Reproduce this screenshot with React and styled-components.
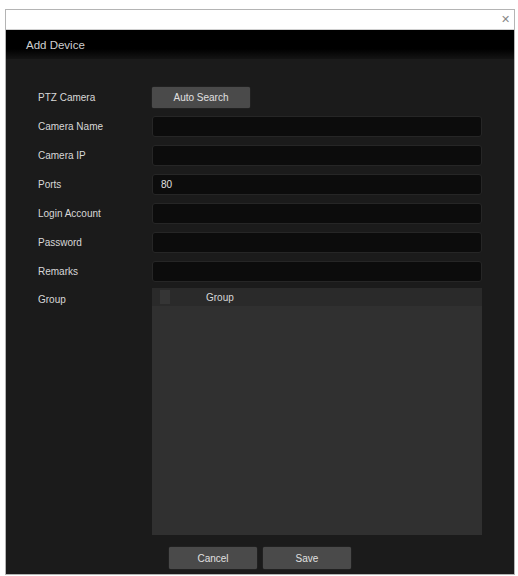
import React from 'react';
import styled, { createGlobalStyle } from 'styled-components';

const GlobalStyle = createGlobalStyle`
  html, body {
    margin: 0;
    padding: 0;
    background: #ffffff;
    font-family: "Liberation Sans", Arial, sans-serif;
  }
`;

const Frame = styled.div`
  margin: 9px 0 0 5px;
  width: 508px;
  height: 564px;
  border: 1px solid #b4b4b4;
  display: flex;
  flex-direction: column;
  background: #1b1b1b;
`;

const TitleBar = styled.div`
  height: 19px;
  background: #ffffff;
  display: flex;
  justify-content: flex-end;
  align-items: center;
  padding-right: 4px;
  border-bottom: 1px solid #d0d0d0;
`;

const CloseBtn = styled.span`
  color: #888;
  font-size: 11px;
  line-height: 1;
`;

const Header = styled.div`
  height: 29px;
  background: linear-gradient(#000 0%, #000 65%, #141414 100%);
  color: #cfcfcf;
  font-size: 11.5px;
  display: flex;
  align-items: center;
  padding-left: 20px;
`;

const Body = styled.div`
  flex: 1;
  padding: 28px 0 0 32px;
  display: flex;
  flex-direction: column;
`;

const Form = styled.div`
  display: grid;
  grid-template-columns: 114px 330px;
  grid-template-rows: repeat(7, 21px) 245px;
  row-gap: 8px;
`;

const Label = styled.div`
  color: #d8d8d8;
  font-size: 10px;
  display: flex;
  align-items: ${p => (p.top ? 'flex-start' : 'center')};
  padding-top: ${p => (p.top ? '4px' : '0')};
`;

const GreyButton = styled.div`
  width: ${p => p.w}px;
  height: ${p => p.h}px;
  background: #4a4a4a;
  border-radius: 2px;
  color: #e0e0e0;
  font-size: 10px;
  display: flex;
  align-items: center;
  justify-content: center;
  box-shadow: 0 0 1px #5a5a5a;
`;

const Input = styled.div`
  background: #0c0c0c;
  border: 1px solid #262626;
  border-radius: 3px;
  color: #e0e0e0;
  font-size: 10px;
  display: flex;
  align-items: center;
  padding-left: 8px;
`;

const GroupPanel = styled.div`
  margin-top: -2px;
  background: #303030;
  display: flex;
  flex-direction: column;
`;

const GroupHead = styled.div`
  height: 18px;
  background: #2a2a2a;
  display: flex;
  align-items: center;
  color: #d8d8d8;
  font-size: 10px;
`;

const Check = styled.span`
  width: 10px;
  height: 14px;
  margin: 0 36px 0 8px;
  background: #353535;
`;

const Footer = styled.div`
  display: flex;
  justify-content: center;
  gap: 6px;
  margin: 12px 0 0 -32px;
`;

const fields = [
  ['Camera Name', ''],
  ['Camera IP', ''],
  ['Ports', '80'],
  ['Login Account', ''],
  ['Password', ''],
  ['Remarks', ''],
];

export default function App() {
  return (
    <>
      <GlobalStyle />
      <Frame>
        <TitleBar>
          <CloseBtn>✕</CloseBtn>
        </TitleBar>
        <Header>Add Device</Header>
        <Body>
          <Form>
            <Label>PTZ Camera</Label>
            <GreyButton w={98} h={21}>Auto Search</GreyButton>
            {fields.map(([name, value]) => (
              <React.Fragment key={name}>
                <Label>{name}</Label>
                <Input>{value}</Input>
              </React.Fragment>
            ))}
            <Label top>Group</Label>
            <GroupPanel>
              <GroupHead>
                <Check />
                Group
              </GroupHead>
            </GroupPanel>
          </Form>
          <Footer>
            <GreyButton w={88} h={22}>Cancel</GreyButton>
            <GreyButton w={88} h={22}>Save</GreyButton>
          </Footer>
        </Body>
      </Frame>
    </>
  );
}
